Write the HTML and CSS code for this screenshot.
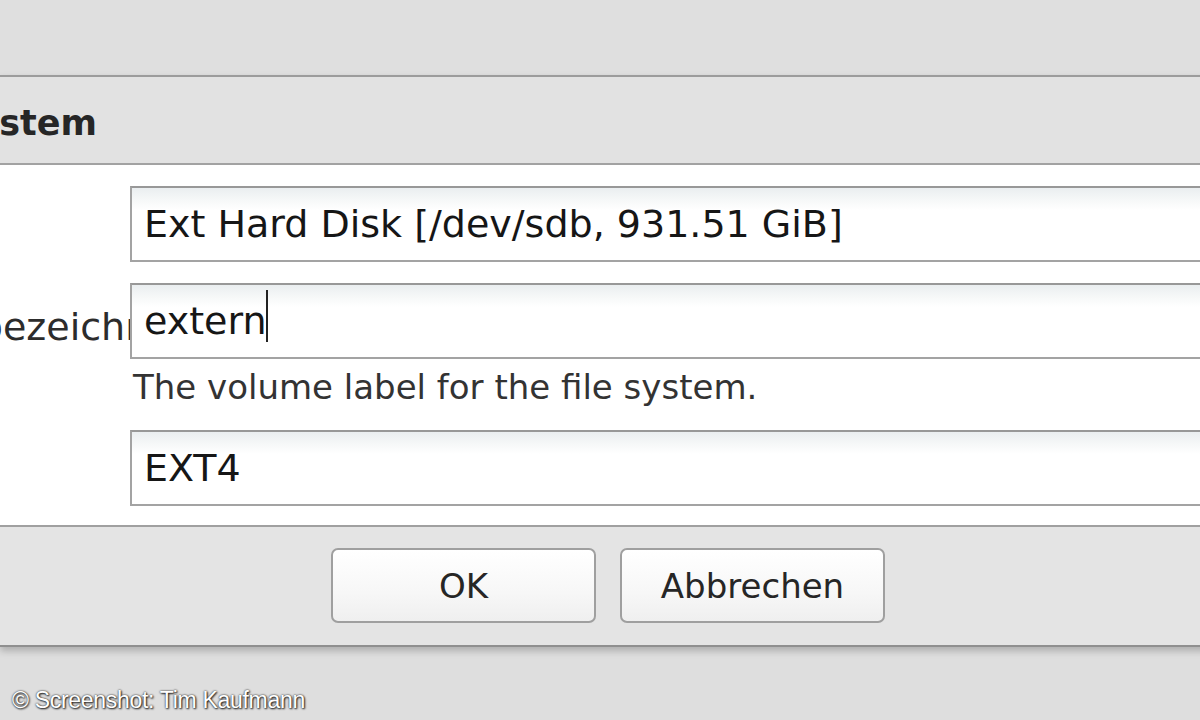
FILE: index.html
```html
<!DOCTYPE html>
<html lang="de">
<head>
<meta charset="utf-8">
<title>Dateisystem</title>
<link rel="stylesheet" href="styles.css">
</head>
<body>
<div class="top"></div>
<div class="dialog">
  <div class="dlg-head">
    <div class="title-clip"><span class="title">Dateisystem</span></div>
  </div>
  <div class="dlg-body">
    <div class="label"></div>
    <div class="field">Ext Hard Disk [/dev/sdb, 931.51 GiB]</div>
    <div class="label label-clip"><span class="label-text">Datenträgerbezeichnung</span></div>
    <div class="field">extern<span class="caret"></span></div>
    <div class="label"></div>
    <div class="help">The volume label for the file system.</div>
    <div class="label"></div>
    <div class="field field-last">EXT4</div>
  </div>
  <div class="dlg-foot">
    <button class="btn">OK</button>
    <button class="btn">Abbrechen</button>
  </div>
</div>
<div class="credit">© Screenshot: Tim Kaufmann</div>
</body>
</html>
```

FILE: styles.css
```css
html, body {
  margin: 0;
  padding: 0;
  overflow: hidden;
  height: 720px;
}

body {
  background: #dedede;
  font-family: "DejaVu Sans", Verdana, sans-serif;
  color: #1e1e1e;
}

.top {
  height: 75px;
  background: #dfdfdf;
}

.dialog {
  width: 1500px;
  border-top: 2px solid #9c9c9c;
  border-bottom: 2px solid #8f8f8f;
  box-shadow: 0 4px 7px rgba(0, 0, 0, 0.22);
  position: relative;
  z-index: 1;
}

.dlg-head {
  height: 88px;
  background: #e2e2e2;
  border-bottom: 2px solid #a2a2a2;
  box-sizing: border-box;
  display: flex;
  align-items: center;
  padding-top: 6px;
}

.title-clip {
  width: 97px;
  overflow: hidden;
  display: flex;
  justify-content: flex-end;
  white-space: nowrap;
}

.title {
  font-weight: bold;
  font-size: 35px;
  color: #262626;
  flex: none;
}

.dlg-body {
  background: #fff;
  display: grid;
  grid-template-columns: 130px 1fr;
  padding: 21px 0 19px 0;
  border-bottom: 2px solid #a0a0a0;
}

.label {
  display: flex;
  align-items: center;
  overflow: hidden;
  white-space: nowrap;
  font-size: 38px;
  color: #2c2c2c;
}

.label-text {
  flex: none;
  margin-left: -253px;
  padding-bottom: 10px;
}

.field {
  border: 2px solid #a3a3a3;
  border-top-color: #989898;
  background: linear-gradient(#eaeef0 0px, #f6f8f8 12px, #ffffff 22px);
  font-size: 38px;
  line-height: 44px;
  height: 44px;
  padding: 14px 12px;
  margin-bottom: 21px;
  white-space: nowrap;
  color: #161616;
}

.field-last {
  margin-bottom: 0;
}

.caret {
  display: inline-block;
  width: 2px;
  height: 52px;
  background: #222;
  vertical-align: -8px;
  margin-top: -9px;
  margin-left: -1px;
}

.help {
  font-size: 34px;
  line-height: 40px;
  color: #333;
  margin: -13px 0 23px 3px;
  white-space: nowrap;
}

.dlg-foot {
  background: #e4e4e4;
  display: flex;
  gap: 24px;
  padding: 21px 0 22px 331px;
}

.btn {
  width: 265px;
  height: 75px;
  border: 2px solid #9f9f9f;
  border-radius: 7px;
  background: linear-gradient(#ffffff, #f7f7f7 60%, #efefef);
  font-family: "DejaVu Sans", Verdana, sans-serif;
  font-size: 34px;
  color: #262626;
  padding: 0;
  margin: 0;
}

.credit {
  padding: 40px 0 0 12px;
  font-family: "Liberation Sans", Arial, sans-serif;
  font-size: 23px;
  letter-spacing: -0.3px;
  color: #fff;
  text-shadow: 0 0 2px #111, 1px 1px 2px #222;
}
```
